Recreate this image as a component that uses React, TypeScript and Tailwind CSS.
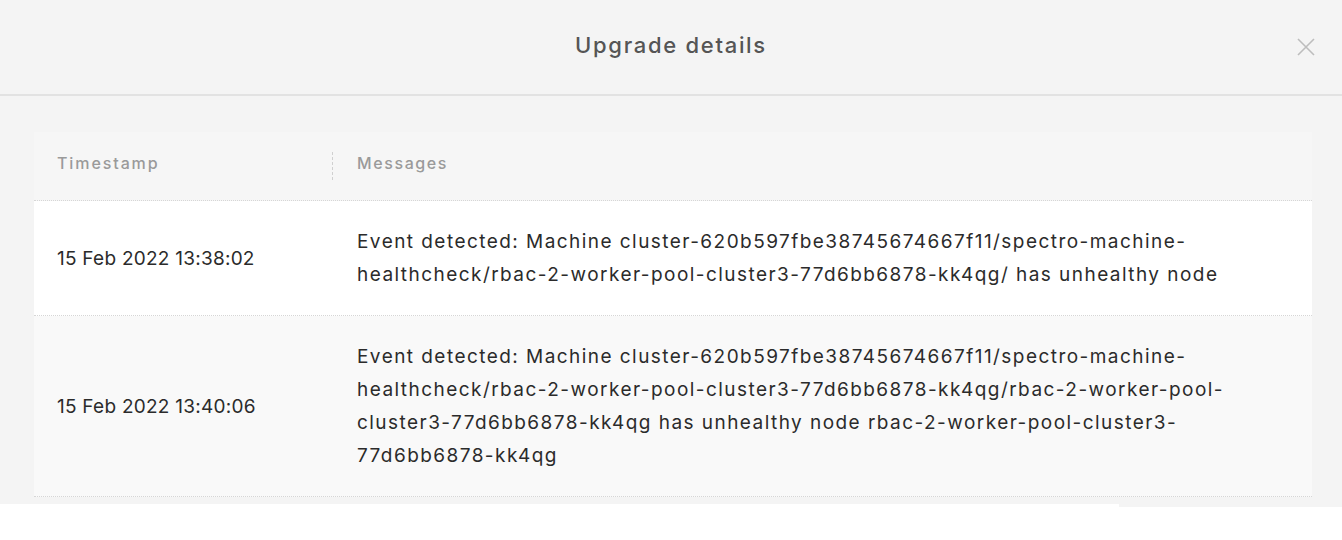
import React from "react";

const rows: { ts: string; lines: string[] }[] = [
  {
    ts: "15 Feb 2022 13:38:02",
    lines: [
      "Event detected: Machine cluster-620b597fbe38745674667f11/spectro-machine-",
      "healthcheck/rbac-2-worker-pool-cluster3-77d6bb6878-kk4qg/ has unhealthy node",
    ],
  },
  {
    ts: "15 Feb 2022 13:40:06",
    lines: [
      "Event detected: Machine cluster-620b597fbe38745674667f11/spectro-machine-",
      "healthcheck/rbac-2-worker-pool-cluster3-77d6bb6878-kk4qg/rbac-2-worker-pool-",
      "cluster3-77d6bb6878-kk4qg has unhealthy node rbac-2-worker-pool-cluster3-",
      "77d6bb6878-kk4qg",
    ],
  },
];

export default function App() {
  return (
    <div className="w-[1342px] h-[540px] bg-white font-['Inter',sans-serif]">
      <div className="h-[96px] bg-[#f4f4f4] border-b-2 border-[#e2e2e2] flex items-center justify-center relative">
        <h1 className="text-[22px] font-medium text-[#555555] tracking-[1.7px] -mt-[4px]">Upgrade details</h1>
        <button className="absolute right-[27px] top-[38px] text-[#bdbdbd]">
          <svg width="18" height="18" viewBox="0 0 18 18" fill="none" stroke="currentColor" strokeWidth="1.6">
            <path d="M1 1L17 17M17 1L1 17" />
          </svg>
        </button>
      </div>
      <div className="bg-[#f4f4f4] pt-[36px] pl-[34px] pr-[30px] pb-[7px]">
        <div className="bg-white">
          <div className="flex h-[69px] bg-[#f6f6f6] border-b border-dotted border-[#d6d6d6] items-center text-[16px] font-medium text-[#9a9a9a] tracking-[1.9px]">
            <div className="w-[299px] pl-[23px] border-r border-dashed border-[#d0d0d0] h-[28px] flex items-center">
              <span className="mb-[6px]">Timestamp</span>
            </div>
            <div className="pl-[24px] tracking-[1.6px]">
              <span className="block mb-[6px]">Messages</span>
            </div>
          </div>
          {rows.map((r, i) => (
            <div
              key={i}
              className={`flex items-center border-b border-dotted border-[#d6d6d6] py-[24px] text-[19px] leading-[33px] text-[#2b2b2b] ${i % 2 === 0 ? "bg-white" : "bg-[#f9f9f9]"}`}
            >
              <div className="w-[299px] pl-[23px] shrink-0 tracking-[0.25px]">{r.ts}</div>
              <div className="pl-[24px] whitespace-nowrap tracking-[1.45px]">
                {r.lines.map((l, j) => (
                  <div key={j}>{l}</div>
                ))}
              </div>
            </div>
          ))}
        </div>
      </div>
      <div className="flex justify-end">
        <div className="w-[223px] h-[3px] bg-[#f4f4f4]" />
      </div>
    </div>
  );
}
